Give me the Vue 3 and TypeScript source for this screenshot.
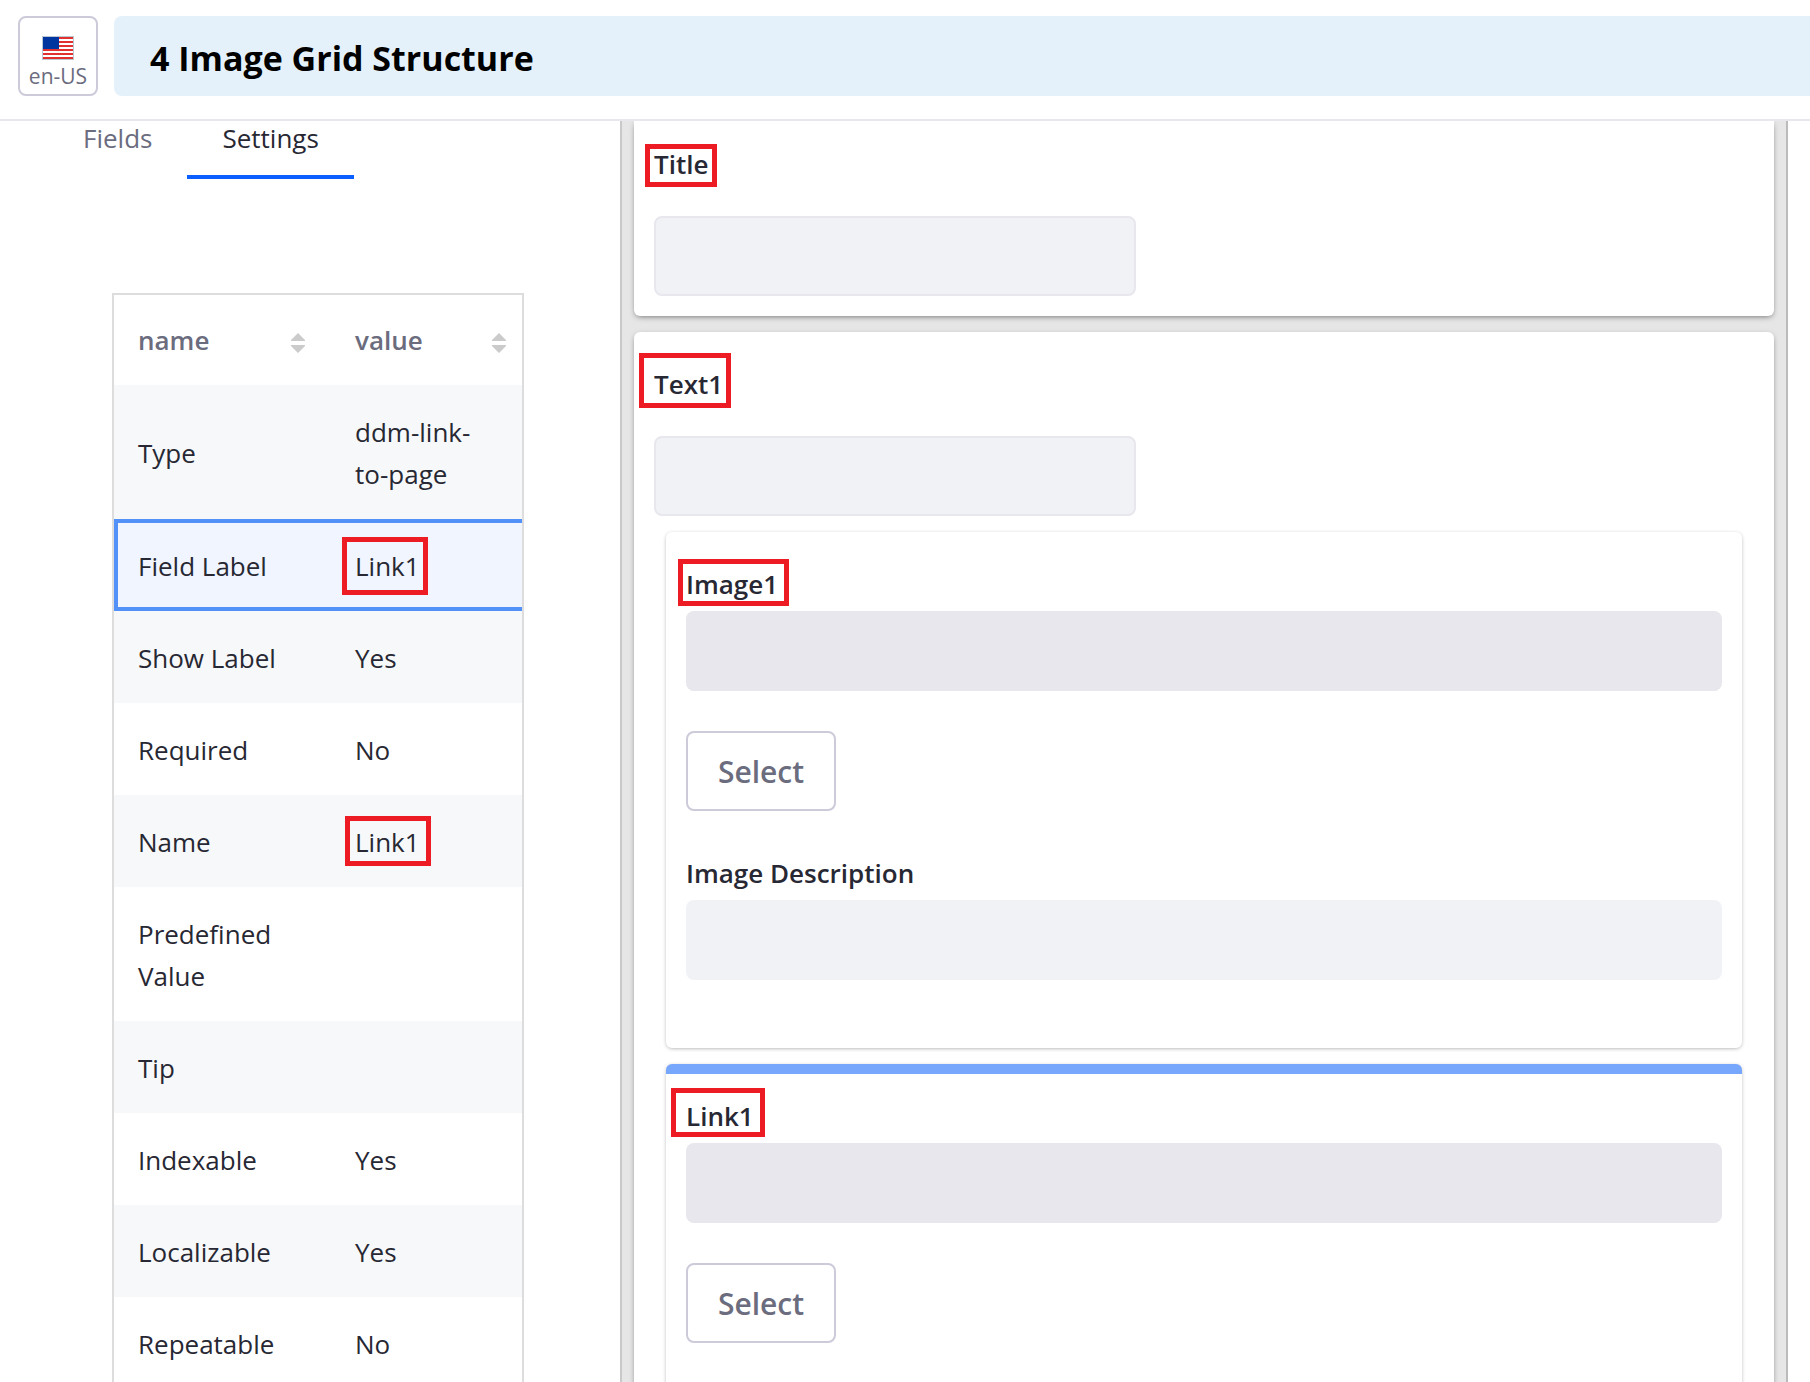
<script setup lang="ts">
import { ref } from 'vue'

interface Setting {
  name: string
  value: string
  mark?: string
}

const tabs = ['Fields', 'Settings']
const activeTab = ref('Settings')
const selected = ref('Field Label')

const settings: Setting[] = [
  { name: 'Type', value: 'ddm-link-to-page' },
  { name: 'Field Label', value: 'Link1', mark: 'mark-label' },
  { name: 'Show Label', value: 'Yes' },
  { name: 'Required', value: 'No' },
  { name: 'Name', value: 'Link1', mark: 'mark-name' },
  { name: 'Predefined Value', value: '' },
  { name: 'Tip', value: '' },
  { name: 'Indexable', value: 'Yes' },
  { name: 'Localizable', value: 'Yes' },
  { name: 'Repeatable', value: 'No' },
]

const columns = ['name', 'value']
</script>

<template>
  <div class="app">
    <header class="topbar">
      <button class="locale" type="button">
        <svg class="flag" width="32" height="24" viewBox="0 0 32 24" aria-hidden="true">
          <rect width="32" height="24" fill="#b9c8d2" />
          <rect x="1" y="1" width="30" height="22" fill="#fff" />
          <path d="M1 2h30M1 6h30M1 10h30M1 14h30M1 18h30M1 22h30" stroke="#e1312f" stroke-width="2" />
          <rect x="1" y="1" width="16" height="12" fill="#0035a0" />
        </svg>
        <span>en-US</span>
      </button>
      <h1 class="title">4 Image Grid Structure</h1>
    </header>

    <div class="workspace">
      <aside class="sidebar">
        <div class="tabs" role="tablist">
          <button
            v-for="tab in tabs"
            :key="tab"
            class="tab"
            :class="{ active: tab === activeTab }"
            type="button"
            role="tab"
            :aria-selected="tab === activeTab"
            @click="activeTab = tab"
          >
            {{ tab }}
          </button>
        </div>

        <table class="settings">
          <thead>
            <tr>
              <th v-for="column in columns" :key="column" scope="col">
                <button class="sort" type="button">
                  {{ column }}
                  <svg width="14" height="20" viewBox="0 0 14 20" aria-hidden="true">
                    <path d="M7 0l7 7v1H0V7zM7 20l7-7v-1H0v1z" fill="#cbcbcb" />
                  </svg>
                </button>
              </th>
            </tr>
          </thead>
          <tbody>
            <tr
              v-for="row in settings"
              :key="row.name"
              :class="{ selected: row.name === selected }"
              @click="selected = row.name"
            >
              <td>{{ row.name }}</td>
              <td>
                <span v-if="row.mark" class="marked" :class="row.mark">{{ row.value }}</span>
                <template v-else>{{ row.value }}</template>
              </td>
            </tr>
          </tbody>
        </table>
      </aside>

      <main class="canvas">
        <section class="card first">
          <label class="marked mark-title" for="title">Title</label>
          <input id="title" class="text-field" type="text" readonly />
        </section>

        <section class="card">
          <label class="marked mark-text" for="text1">Text1</label>
          <input id="text1" class="text-field" type="text" readonly />

          <section class="card nested">
            <label class="marked mark-image" for="image1">Image1</label>
            <input id="image1" class="bar" type="text" disabled />
            <button class="select" type="button">Select</button>
            <label for="image-description">Image Description</label>
            <input id="image-description" class="bar light" type="text" readonly />
          </section>

          <section class="card nested current">
            <label class="marked mark-link" for="link1">Link1</label>
            <input id="link1" class="bar" type="text" disabled />
            <button class="select" type="button">Select</button>
          </section>
        </section>
      </main>
    </div>
  </div>
</template>

<style>
body {
  margin: 0;
  background: #fff;
}
</style>

<style scoped>
.app,
.app *,
.app *::after {
  box-sizing: border-box;
}

.app {
  display: flex;
  flex-direction: column;
  height: 100vh;
  overflow: hidden;
  color: #272833;
  font: 26px/42px "Open Sans", "Noto Sans", sans-serif;
}

button,
input {
  margin: 0;
  font-family: inherit;
}

.topbar {
  display: flex;
  flex: none;
  gap: 16px;
  padding: 16px 0 23px 18px;
  border-bottom: 2px solid #e7e7ed;
}

.locale {
  display: flex;
  flex: none;
  flex-direction: column;
  align-items: center;
  width: 80px;
  height: 80px;
  padding: 18px 0 0;
  border: 2px solid #cdcad9;
  border-radius: 8px;
  background: #fff;
  color: #6b6c7e;
  font-size: 21px;
  line-height: 32px;
}

.flag {
  flex: none;
}

.title {
  flex: 1;
  height: 80px;
  margin: 0;
  padding: 0 36px;
  border-radius: 8px 0 0 8px;
  background: #e4f1fb;
  color: #000;
  font-size: 34px;
  font-weight: 700;
  line-height: 84px;
}

.workspace {
  display: flex;
  flex: 1;
  min-height: 0;
  overflow: hidden;
}

.sidebar {
  flex: 0 0 620px;
}

.tabs {
  display: flex;
  padding-left: 48px;
}

.tab {
  height: 58px;
  padding: 0 35px 20px;
  border: 0;
  border-bottom: 4px solid transparent;
  background: none;
  color: #6b6c7e;
  font-size: 26px;
  line-height: 32px;
}

.tab.active {
  border-bottom-color: #0b5fff;
  color: #272833;
}

.settings {
  width: 412px;
  margin: 114px 0 0 112px;
  border: 2px solid #ddd;
  border-spacing: 0;
  table-layout: fixed;
}

th {
  padding: 24px 16px 24px 24px;
  text-align: left;
}

th:first-child {
  width: 207px;
}

th:last-child,
td:last-child {
  padding-left: 34px;
}

.sort {
  display: flex;
  align-items: center;
  justify-content: space-between;
  width: 100%;
  padding: 0;
  border: 0;
  background: none;
  color: #6b6c7e;
  font-size: 26px;
  font-weight: 600;
  line-height: 42px;
}

.sort svg {
  margin-top: 6px;
}

td {
  padding: 26px 24px 24px;
}

tbody tr:nth-child(odd) {
  background: #f7f8fa;
}

tbody tr.selected {
  background: #f0f5ff;
  box-shadow: inset 4px 0 #5291f7, inset 0 4px #5291f7, inset 0 -4px #5291f7;
}

.canvas {
  display: flex;
  flex: 1;
  flex-direction: column;
  gap: 16px;
  min-width: 0;
  margin-right: 22px;
  padding: 0 12px;
  border-right: 2px solid #bbb;
  border-left: 2px solid #c9c9c9;
  background: #e6e6e6;
}

.card {
  display: flex;
  flex: none;
  flex-direction: column;
  align-items: flex-start;
  padding: 31px 20px 20px;
  border-radius: 6px;
  background: #fff;
  box-shadow: 0 2px 6px -2px rgba(0, 0, 0, 0.6);
}

.card.first {
  padding-top: 22px;
  border-radius: 0 0 6px 6px;
}

.card label {
  font-weight: 600;
}

.text-field {
  width: 482px;
  max-width: 100%;
  height: 80px;
  margin-top: 31px;
  border: 2px solid #e7e7ed;
  border-radius: 8px;
  background: #f1f2f5;
}

.card.nested {
  align-self: stretch;
  margin: 16px 12px 0;
  padding-bottom: 68px;
  box-shadow: 0 1px 4px -1px rgba(0, 0, 0, 0.4);
}

.card.current {
  padding-top: 21px;
  border-top: 10px solid #77a6fd;
}

.bar {
  width: 100%;
  height: 80px;
  margin-top: 6px;
  border: 0;
  border-radius: 8px;
  background: #e7e7ed;
}

.bar.light {
  background: #f1f2f5;
}

.select {
  width: 150px;
  height: 80px;
  margin: 40px 0 41px;
  padding: 2px 0 0;
  border: 2px solid #cdcad9;
  border-radius: 8px;
  background: #fff;
  color: #6b6c7e;
  font-size: 30px;
  font-weight: 600;
  line-height: 42px;
}

/* Red call-outs laid over the labels */
.marked {
  display: inline-block;
  position: relative;
}

.marked::after {
  position: absolute;
  border: 5px solid #ed1c24;
  content: "";
  pointer-events: none;
}

.mark-label::after {
  top: -8px;
  left: -13px;
  width: 86px;
  height: 58px;
}

.mark-name::after {
  top: -5px;
  left: -10px;
  width: 86px;
  height: 50px;
}

.mark-title::after {
  top: 1px;
  left: -9px;
  width: 72px;
  height: 43px;
}

.mark-text::after {
  top: -10px;
  left: -15px;
  width: 92px;
  height: 55px;
}

.mark-image::after {
  top: -4px;
  left: -8px;
  width: 111px;
  height: 47px;
}

.mark-link::after {
  top: -7px;
  left: -15px;
  width: 94px;
  height: 49px;
}
</style>
